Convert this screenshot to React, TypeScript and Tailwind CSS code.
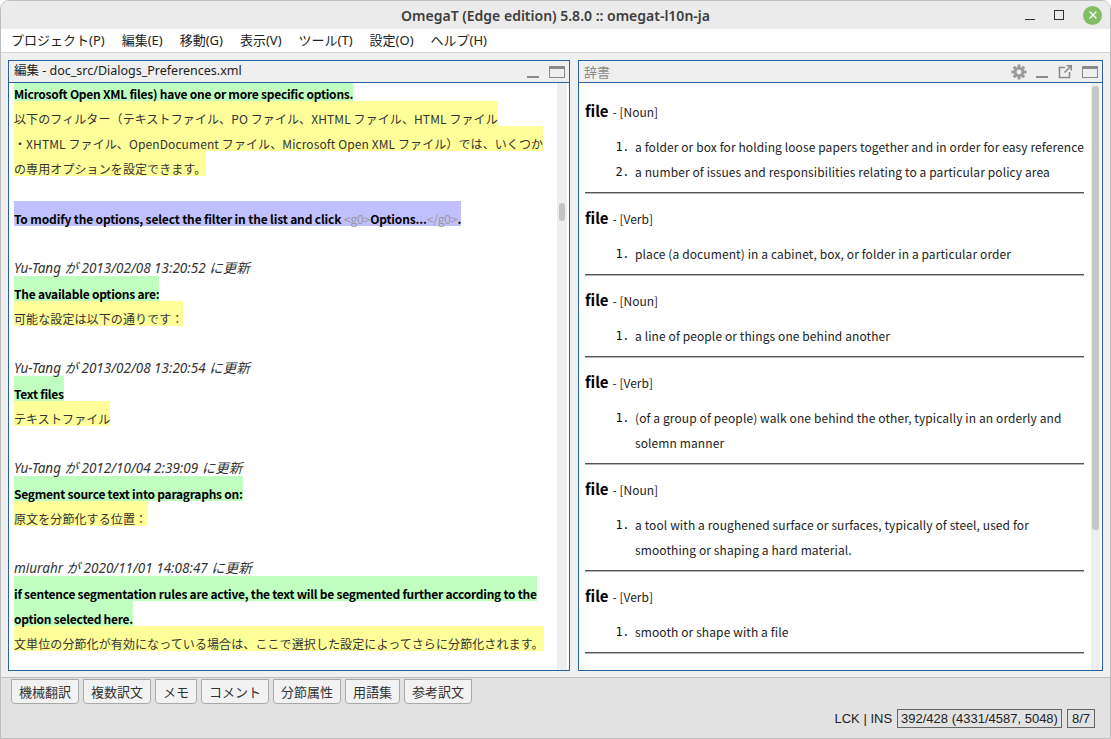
import React from "react";
import { X } from "lucide-react";

const UI = { fontFamily: '"Noto Sans", "Noto Sans CJK JP", sans-serif' };
const BODY = { fontFamily: '"Noto Sans CJK JP", "Noto Sans", sans-serif' };
const META = { fontFamily: '"Noto Sans", "Noto Sans CJK JP", sans-serif' };
const NUM = { fontFamily: '"DejaVu Sans Mono", monospace' };
const STATUS = { fontFamily: '"Liberation Sans", "Noto Sans CJK JP", sans-serif' };

type Row =
  | { kind: "blank" }
  | { kind: "src"; text: string }
  | { kind: "tgt"; text: string }
  | { kind: "meta"; text: string }
  | { kind: "cur" };

const rows: Row[] = [
  { kind: "src", text: "Microsoft Open XML files) have one or more specific options." },
  { kind: "tgt", text: "以下のフィルター（テキストファイル、PO ファイル、XHTML ファイル、HTML ファイル" },
  { kind: "tgt", text: "・XHTML ファイル、OpenDocument ファイル、Microsoft Open XML ファイル）では、いくつか" },
  { kind: "tgt", text: "の専用オプションを設定できます。" },
  { kind: "blank" },
  { kind: "cur" },
  { kind: "blank" },
  { kind: "meta", text: "Yu-Tang が 2013/02/08 13:20:52 に更新" },
  { kind: "src", text: "The available options are:" },
  { kind: "tgt", text: "可能な設定は以下の通りです：" },
  { kind: "blank" },
  { kind: "meta", text: "Yu-Tang が 2013/02/08 13:20:54 に更新" },
  { kind: "src", text: "Text files" },
  { kind: "tgt", text: "テキストファイル" },
  { kind: "blank" },
  { kind: "meta", text: "Yu-Tang が 2012/10/04 2:39:09 に更新" },
  { kind: "src", text: "Segment source text into paragraphs on:" },
  { kind: "tgt", text: "原文を分節化する位置：" },
  { kind: "blank" },
  { kind: "meta", text: "miurahr が 2020/11/01 14:08:47 に更新" },
  { kind: "src", text: "if sentence segmentation rules are active, the text will be segmented further according to the" },
  { kind: "src", text: "option selected here." },
  { kind: "tgt", text: "文単位の分節化が有効になっている場合は、ここで選択した設定によってさらに分節化されます。" },
  { kind: "blank" },
];

const entries = [
  { pos: "Noun", defs: [["a folder or box for holding loose papers together and in order for easy reference"], ["a number of issues and responsibilities relating to a particular policy area"]] },
  { pos: "Verb", defs: [["place (a document) in a cabinet, box, or folder in a particular order"]] },
  { pos: "Noun", defs: [["a line of people or things one behind another"]] },
  { pos: "Verb", defs: [["(of a group of people) walk one behind the other, typically in an orderly and", "solemn manner"]] },
  { pos: "Noun", defs: [["a tool with a roughened surface or surfaces, typically of steel, used for", "smoothing or shaping a hard material."]] },
  { pos: "Verb", defs: [["smooth or shape with a file"]] },
];

const menus = ["プロジェクト(P)", "編集(E)", "移動(G)", "表示(V)", "ツール(T)", "設定(O)", "ヘルプ(H)"];
const tabs = ["機械翻訳", "複数訳文", "メモ", "コメント", "分節属性", "用語集", "参考訳文"];

const MinIcon = ({ color = "#8a8a8a" }: { color?: string }) => (
  <div className="w-[12px] h-[12px] flex items-end">
    <div className="w-full h-[2px]" style={{ background: color }} />
  </div>
);

const MaxIcon = () => (
  <div className="w-[16px] h-[12px] border border-[#8a8a8a] border-t-[3px]" />
);

const Gear = () => (
  <svg width="16" height="16" viewBox="0 0 16 16">
    <g fill="#9a9a9a">
      {[0, 45, 90, 135].map((a) => (
        <rect key={a} x="6.5" y="0.5" width="3" height="15" transform={`rotate(${a} 8 8)`} />
      ))}
      <circle cx="8" cy="8" r="5.2" />
    </g>
    <circle cx="8" cy="8" r="2.4" fill="#efefef" />
  </svg>
);

const Popout = () => (
  <svg width="16" height="16" viewBox="0 0 16 16" fill="none" stroke="#8a8a8a" strokeWidth="1.6">
    <path d="M8 3.5H2.5v10h10V8" />
    <path d="M9.5 1.8h4.7v4.7" />
    <path d="M14 2 7.5 8.5" />
  </svg>
);

function LeftRow({ row }: { row: Row }) {
  const base = "h-[25px] w-fit pt-[10px] leading-[15px] text-[12px] whitespace-nowrap";
  if (row.kind === "blank") return <div className="h-[25px]" />;
  if (row.kind === "src")
    return (
      <div className={`${base} bg-[#c0ffc0] font-bold text-black tracking-[-0.25px]`} style={BODY}>
        {row.text}
      </div>
    );
  if (row.kind === "tgt")
    return (
      <div className={`${base} bg-[#ffff99] text-[#333] tracking-[0.1px]`} style={BODY}>
        {row.text}
      </div>
    );
  if (row.kind === "meta")
    return (
      <div className={`${base} text-[13.5px] italic text-[#333]`} style={META}>
        {row.text}
      </div>
    );
  return (
    <div className={`${base} bg-[#c0c0ff] font-bold text-black tracking-[-0.15px]`} style={BODY}>
      To modify the options, select the filter in the list and click{" "}
      <span className="font-normal text-[#999]">&lt;g0&gt;</span>Options...
      <span className="font-normal text-[#999]">&lt;/g0&gt;</span>.
    </div>
  );
}

export default function App() {
  return (
    <div className="w-[1111px] h-[739px] bg-white overflow-hidden" style={UI}>
      <div className="w-full h-full flex flex-col border border-[#bdbdbd] rounded-t-[9px] overflow-hidden bg-[#f0f0f0]">
        {/* Title bar */}
        <div className="h-[28px] shrink-0 bg-[#ebebeb] relative flex items-center justify-center">
          <span className="text-[14px] font-semibold text-[#3d3d3d]">OmegaT (Edge edition) 5.8.0 :: omegat-l10n-ja</span>
          <div className="absolute right-[8px] top-0 h-full flex items-center gap-[19px]">
            <div className="w-[10px] h-[10px] flex items-end">
              <div className="w-full h-[1.5px] bg-[#333]" />
            </div>
            <div className="w-[10px] h-[10px] border-[1.5px] border-[#333]" />
            <div className="w-[19px] h-[19px] rounded-full bg-[#84bd68] flex items-center justify-center">
              <X size={12} strokeWidth={2.6} color="#fff" />
            </div>
          </div>
        </div>

        {/* Menu bar */}
        <div className="h-[24px] shrink-0 bg-white border-b border-[#d4d4d4] flex items-center pl-[10px] gap-[17px] text-[13px] text-[#222]">
          {menus.map((m) => (
            <span key={m}>{m}</span>
          ))}
        </div>

        {/* Panes */}
        <div className="flex gap-[8px] px-[7px] pt-[7px] h-[624px] shrink-0">
          {/* Editor pane */}
          <div className="w-[562px] h-[611px] flex flex-col border border-[#2a62a0]">
            <div className="h-[22px] shrink-0 bg-[#efefef] border-b border-[#2a62a0] flex items-center pl-[5px] pr-[4px]">
              <span className="text-[12.5px] text-[#222] flex-1">編集 - doc_src/Dialogs_Preferences.xml</span>
              <div className="flex items-center gap-[10px]">
                <MinIcon />
                <MaxIcon />
              </div>
            </div>
            <div className="flex-1 flex bg-white overflow-hidden">
              <div className="flex-1 min-w-0 overflow-hidden pl-[5px]">
                <div className="-mt-[7px]">
                  {rows.map((r, i) => (
                    <LeftRow key={i} row={r} />
                  ))}
                </div>
              </div>
              <div className="w-[10px] bg-[#eeeeee] pt-[120px] flex justify-center">
                <div className="w-[6px] h-[18px] rounded-full bg-[#c4c4c4]" />
              </div>
              <div className="w-[2px]" />
            </div>
          </div>

          {/* Dictionary pane */}
          <div className="flex-1 min-w-0 h-[611px] flex flex-col border border-[#2a62a0]">
            <div className="h-[22px] shrink-0 bg-[#efefef] border-b border-[#2a62a0] flex items-center pl-[5px] pr-[4px]">
              <span className="text-[13px] text-[#8c8c8c] flex-1" style={BODY}>辞書</span>
              <div className="flex items-center gap-[9px]">
                <Gear />
                <MinIcon />
                <Popout />
                <MaxIcon />
              </div>
            </div>
            <div className="flex-1 flex bg-white overflow-hidden">
              <div className="flex-1 min-w-0 overflow-hidden pl-[6px] pr-[7px] pt-[4px]" style={BODY}>
                {entries.map((e, i) => (
                  <div key={i}>
                    <div className="mt-[12px] h-[25px] flex items-center gap-[4px] whitespace-nowrap">
                      <span className="text-[15px] font-bold text-black">file</span>
                      <span className="text-[12px] text-[#222]">- [{e.pos}]</span>
                    </div>
                    <div className="mt-[10px]">
                      {e.defs.map((lines, j) =>
                        lines.map((l, k) => (
                          <div key={`${j}-${k}`} className="h-[25px] flex items-center text-[12px] text-[#222] whitespace-nowrap tracking-[0.1px]">
                            <span className="w-[50px] shrink-0 text-right pr-[6px] text-[#111] text-[12px] tracking-[-0.5px]" style={NUM}>
                              {k === 0 ? `${j + 1}.` : ""}
                            </span>
                            <span>{l}</span>
                          </div>
                        ))
                      )}
                    </div>
                    <div className="mt-[8px]">
                      <div className="h-px bg-[#555]" />
                      <div className="h-px bg-[#b5b5b5]" />
                    </div>
                  </div>
                ))}
              </div>
              <div className="w-[9px] bg-[#eeeeee] pt-[3px] flex justify-center">
                <div className="w-[7px] h-[444px] rounded-full bg-[#c6c6c6]" />
              </div>
              <div className="w-[2px]" />
            </div>
          </div>
        </div>

        {/* Bottom area */}
        <div className="flex-1 bg-[#e2e2e2] border-t border-[#bdbdbd] flex flex-col">
          <div className="flex gap-[4px] pl-[10px] mt-[1px]">
            {tabs.map((t) => (
              <div
                key={t}
                className="h-[25px] px-[7px] flex items-center bg-[#f2f2f2] border border-[#a9a9a9] rounded-b-[4px] text-[13px] text-[#333]"
                style={BODY}
              >
                {t}
              </div>
            ))}
          </div>
          <div className="flex justify-end items-center gap-[5px] pr-[15px] mt-[5px] text-[13px] text-[#222]" style={STATUS}>
            <span>LCK | INS</span>
            <span className="h-[19px] px-[3px] flex items-center border border-[#666]">392/428 (4331/4587, 5048)</span>
            <span className="h-[19px] px-[4px] flex items-center border border-[#666]">8/7</span>
          </div>
        </div>
      </div>
    </div>
  );
}
